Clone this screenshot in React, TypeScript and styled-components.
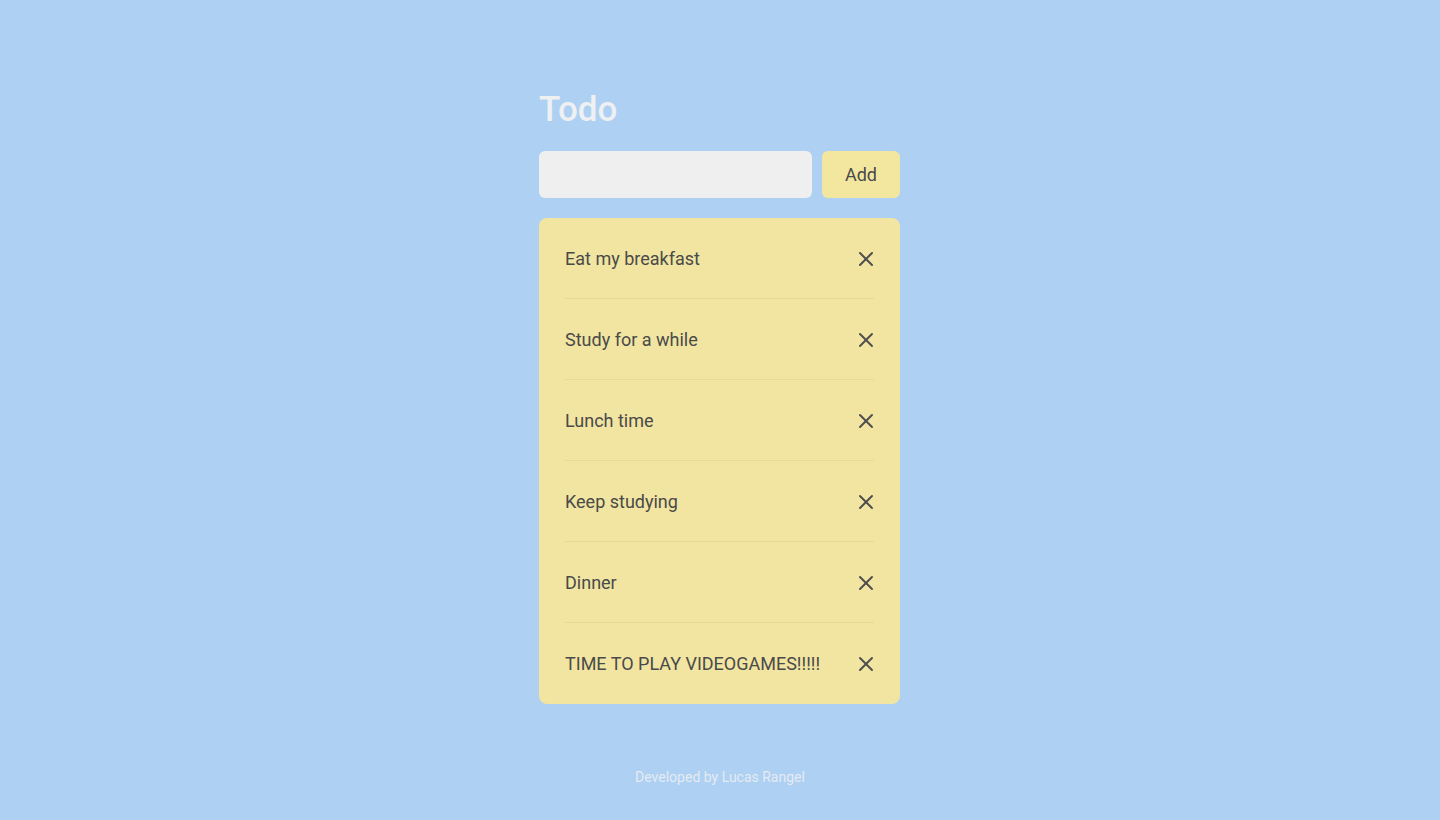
import React, { useState } from "react";
import styled, { createGlobalStyle } from "styled-components";
import { X } from "lucide-react";

const Global = createGlobalStyle`
  * { box-sizing: border-box; }
  html, body { margin: 0; padding: 0; }
  body {
    background: #aed0f2;
    font-family: Roboto, "Noto Sans", "Liberation Sans", sans-serif;
  }
`;

const Page = styled.div`
  min-height: 100vh;
  display: flex;
  flex-direction: column;
  align-items: center;
  padding-top: 89px;
  padding-bottom: 35px;
`;

const Container = styled.main`
  width: 362px;
  padding-right: 1px;
  display: flex;
  flex-direction: column;
`;

const Title = styled.h1`
  margin: 0 0 20px;
  font-size: 35px;
  line-height: 42px;
  font-weight: 500;
  color: #eef0f2;
`;

const Form = styled.form`
  display: flex;
  gap: 10px;
  margin-bottom: 20px;
`;

const Input = styled.input`
  flex: 1;
  min-width: 0;
  height: 47px;
  border: none;
  border-radius: 6px;
  background: #efefef;
  padding: 0 14px;
  font-family: inherit;
  font-size: 18px;
  color: #4a4a4a;
  outline: none;
`;

const AddButton = styled.button`
  width: 78px;
  height: 47px;
  border: none;
  border-radius: 6px;
  background: #f3e7a0;
  font-family: inherit;
  font-size: 18px;
  color: #4a4a4a;
  cursor: pointer;
`;

const List = styled.ul`
  list-style: none;
  margin: 0;
  padding: 0 26px;
  background: #f1e5a1;
  border-radius: 8px;
`;

const Item = styled.li<{ $last: boolean }>`
  height: 81px;
  display: flex;
  align-items: center;
  justify-content: space-between;
  padding-top: 1px;
  border-bottom: 1px solid ${(p) => (p.$last ? "transparent" : "#e6da98")};
  font-size: 18px;
  color: #4a4a4a;
`;

const RemoveButton = styled.button`
  border: none;
  background: none;
  padding: 0;
  margin-right: -4px;
  display: flex;
  color: #4f4f4f;
  cursor: pointer;
`;

const Footer = styled.footer`
  margin-top: auto;
  font-size: 14px;
  line-height: 16px;
  color: #e4ebf2;
`;

const initial = [
  "Eat my breakfast",
  "Study for a while",
  "Lunch time",
  "Keep studying",
  "Dinner",
  "TIME TO PLAY VIDEOGAMES!!!!!",
];

export default function App() {
  const [todos, setTodos] = useState(initial);
  const [text, setText] = useState("");

  return (
    <>
      <Global />
      <Page>
        <Container>
          <Title>Todo</Title>
          <Form
            onSubmit={(e) => {
              e.preventDefault();
              if (text.trim()) {
                setTodos([...todos, text.trim()]);
                setText("");
              }
            }}
          >
            <Input value={text} onChange={(e) => setText(e.target.value)} />
            <AddButton type="submit">Add</AddButton>
          </Form>
          <List>
            {todos.map((t, i) => (
              <Item key={i} $last={i === todos.length - 1}>
                <span>{t}</span>
                <RemoveButton
                  type="button"
                  onClick={() => setTodos(todos.filter((_, j) => j !== i))}
                >
                  <X size={24} strokeWidth={2} />
                </RemoveButton>
              </Item>
            ))}
          </List>
        </Container>
        <Footer>Developed by Lucas Rangel</Footer>
      </Page>
    </>
  );
}
